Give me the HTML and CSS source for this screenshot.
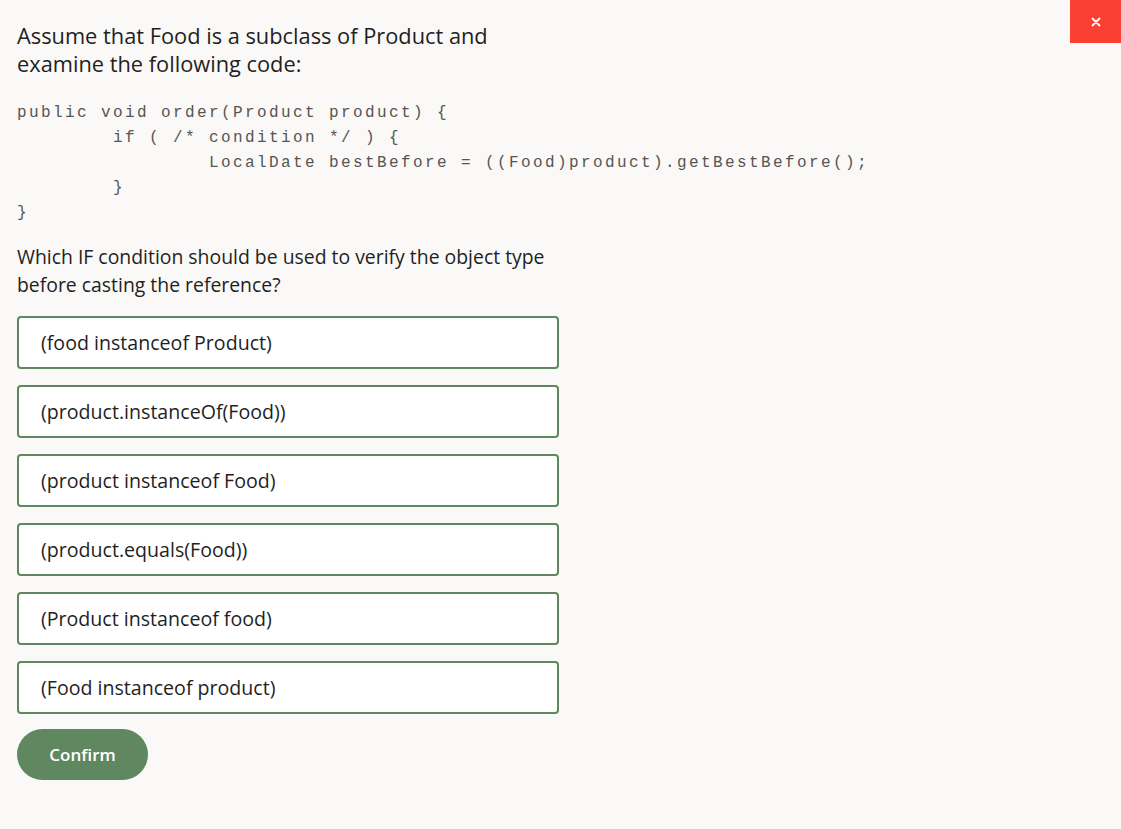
FILE: index.html
```html
<!DOCTYPE html>
<html lang="en">
<head>
<meta charset="utf-8">
<title>Question</title>
<link rel="stylesheet" href="styles.css">
</head>
<body>
<button class="close" aria-label="Close">
  <svg width="10" height="10" viewBox="0 0 10 10"><path d="M1.5 1.5L8.5 8.5M8.5 1.5L1.5 8.5" stroke="#fff" stroke-width="1.8" stroke-linecap="round"/></svg>
</button>
<main class="quiz">
  <h1 class="prompt">Assume that Food is a subclass of Product and<br>examine the following code:</h1>
  <pre class="code">public void order(Product product) {
	if ( /* condition */ ) {
		LocalDate bestBefore = ((Food)product).getBestBefore();
	}
}</pre>
  <p class="question">Which IF condition should be used to verify the object type<br>before casting the reference?</p>
  <div class="options">
    <div class="option">(food instanceof Product)</div>
    <div class="option">(product.instanceOf(Food))</div>
    <div class="option">(product instanceof Food)</div>
    <div class="option">(product.equals(Food))</div>
    <div class="option">(Product instanceof food)</div>
    <div class="option">(Food instanceof product)</div>
  </div>
  <button class="confirm">Confirm</button>
</main>
</body>
</html>
```
FILE: styles.css
```css
html, body {
  margin: 0;
  padding: 0;
}
body {
  background: #faf9f7;
  font-family: "Open Sans", Lato, sans-serif;
  color: #1f1f1f;
  min-height: 829px;
  position: relative;
}
.close {
  position: absolute;
  top: 0;
  right: 0;
  width: 51px;
  height: 43px;
  border: 0;
  padding: 0;
  background: #fc3f33;
  display: flex;
  align-items: center;
  justify-content: center;
}
.quiz {
  padding: 22px 17px 0;
  width: 542px;
}
.prompt {
  margin: 0;
  font-size: 21.8px;
  font-weight: 400;
  line-height: 28px;
}
.code {
  margin: 23px 0 0;
  font-family: "Liberation Mono", monospace;
  font-size: 16px;
  letter-spacing: 2.4px;
  line-height: 25px;
  color: #555;
  tab-size: 8;
  white-space: pre;
}
.question {
  margin: 17px 0 0;
  font-size: 19.4px;
  line-height: 28px;
}
.options {
  margin-top: 17px;
  display: flex;
  flex-direction: column;
  gap: 16px;
}
.option {
  height: 53px;
  box-sizing: border-box;
  border: 2px solid #5f8760;
  border-radius: 4px;
  background: #fff;
  display: flex;
  align-items: center;
  padding-left: 22px;
  font-size: 19.6px;
}
.confirm {
  margin-top: 15px;
  width: 131px;
  height: 51px;
  border: 0;
  border-radius: 26px;
  background: #5f8760;
  color: #fff;
  font-family: "Open Sans", Lato, sans-serif;
  font-size: 17px;
  font-weight: 600;
}
```
